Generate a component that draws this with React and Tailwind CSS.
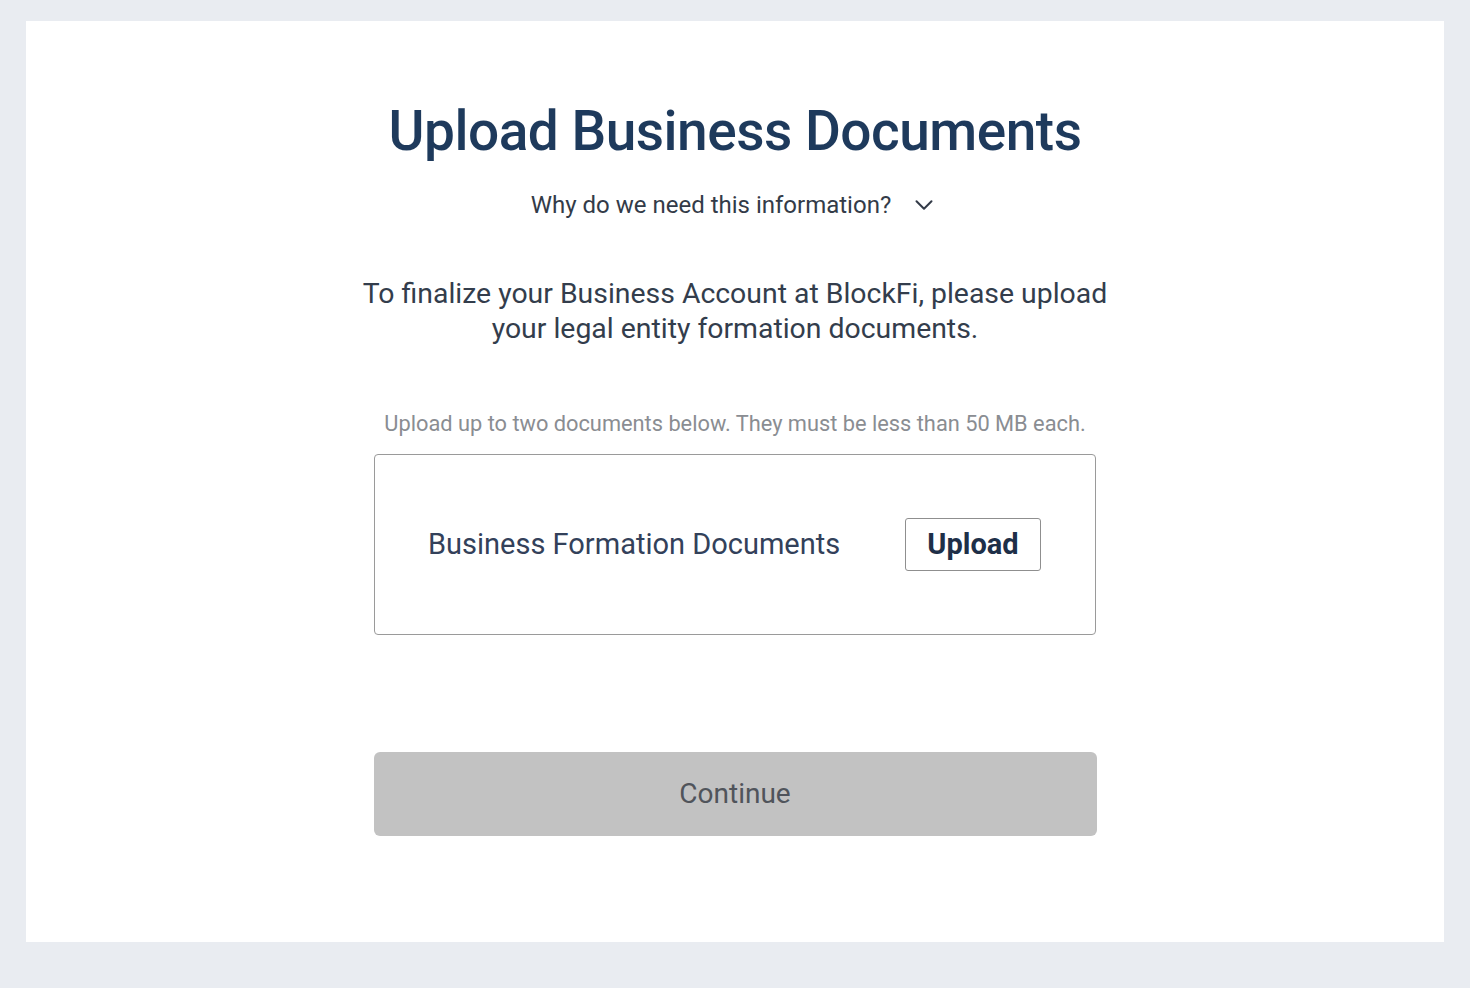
import { ChevronDown } from "lucide-react";

const App = () => {
  return (
    <div className="min-h-screen bg-[#e9ecf1] px-[26px] pt-[21px] pb-[46px] font-['Roboto',sans-serif]">
      <div className="bg-white h-[921px] flex flex-col items-center pt-[76px]">
        <h1 className="text-[55px] leading-[68px] font-medium text-[#1e3a5c] tracking-[-0.5px]">
          Upload Business Documents
        </h1>

        <button className="mt-[25px] flex items-center gap-[18px] text-[24px] leading-[30px] text-[#333b48]">
          Why do we need this information?
          <ChevronDown className="w-[30px] h-[30px]" strokeWidth={1.6} />
        </button>

        <p className="mt-[56px] text-center text-[28.4px] leading-[35px] text-[#333d4c] w-[780px]">
          To finalize your Business Account at BlockFi, please upload your legal entity formation documents.
        </p>

        <p className="mt-[65px] text-[21.8px] leading-[26px] text-[#8a8d92]">
          Upload up to two documents below. They must be less than 50 MB each.
        </p>

        <div className="mt-[17px] w-[722px] h-[181px] border border-[#9a9a9a] rounded-[4px] flex items-center justify-between pl-[53px] pr-[54px]">
          <span className="text-[29px] text-[#33415a]">Business Formation Documents</span>
          <button className="w-[136px] h-[53px] border border-[#8f8f8f] rounded-[3px] text-[29px] font-bold text-[#1e2f48]">
            Upload
          </button>
        </div>

        <button className="mt-[117px] w-[723px] h-[84px] bg-[#c2c2c2] rounded-[6px] text-[28px] text-[#50545b]">
          Continue
        </button>
      </div>
    </div>
  );
};

export default App;
